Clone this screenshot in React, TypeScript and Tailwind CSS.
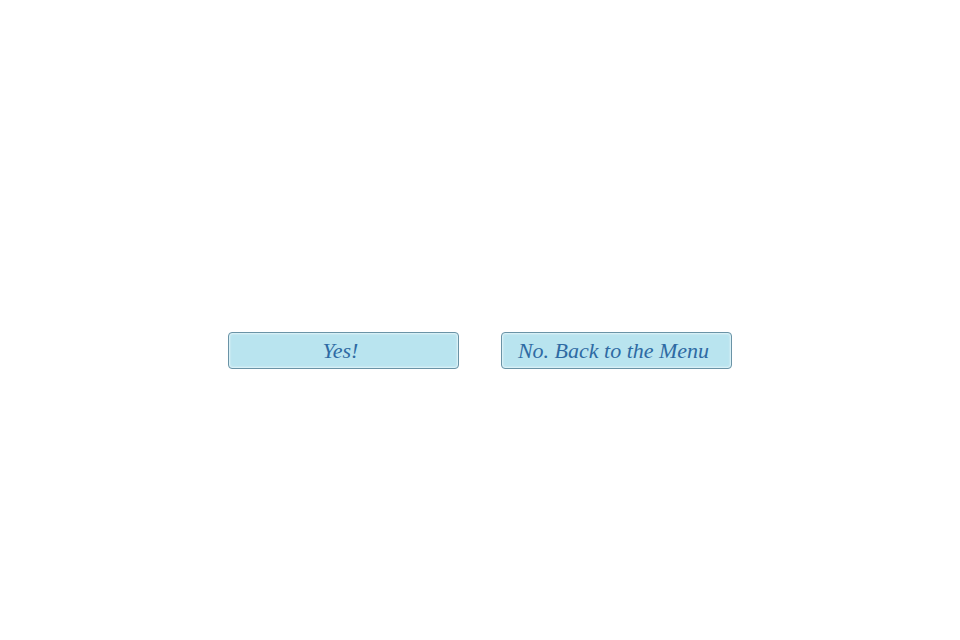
export default function App() {
  return (
    <div className="flex h-[640px] w-[960px] items-start justify-center bg-white pt-[332px]">
      <div className="flex gap-[42px]">
        <ConfirmButton label="Yes!" />
        <ConfirmButton label="No. Back to the Menu" />
      </div>
    </div>
  );
}

function ConfirmButton({ label }: { label: string }) {
  return (
    <button className="flex h-[37px] w-[231px] items-center justify-center rounded-[4px] border border-[#6a93a6] bg-[#b9e4ef] pr-[6px] font-['Liberation_Serif',serif] text-[22px] italic text-[#2e6aa3] shadow-[inset_0_0_2px_1px_rgba(255,255,255,0.6)]">
      {label}
    </button>
  );
}
